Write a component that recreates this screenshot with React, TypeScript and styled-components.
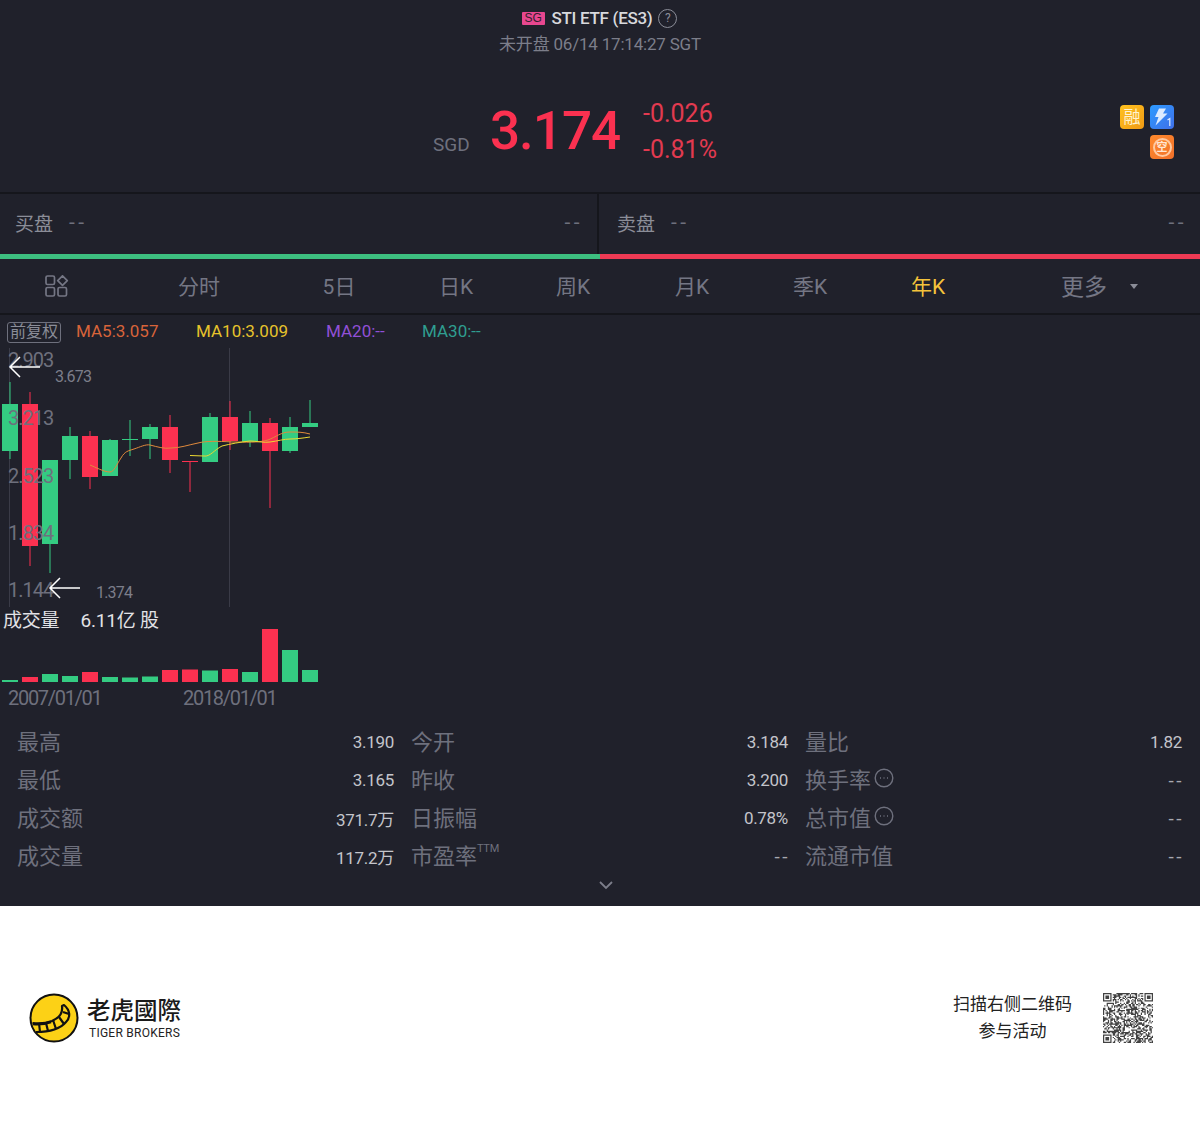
import styled, { createGlobalStyle } from "styled-components";

const FONT = `Roboto, "Noto Sans CJK SC", sans-serif`;
const GREEN = "#34cc82";
const RED = "#fb3150";

const GlobalStyle = createGlobalStyle`
  body {
    margin: 0;
    background: #fff;
    font-family: ${FONT};
  }
`;

// [x, bodyTop, bodyBottom, wickTop, wickBottom, isUp]
const candles: [number, number, number, number, number, boolean][] = [
  [2, 404, 451, 382, 459, false],
  [22, 404, 546, 392, 566, true],
  [42, 460, 544, 460, 573, false],
  [62, 436, 460, 427, 479, false],
  [82, 436, 477, 431, 489, true],
  [102, 440, 476, 439, 476, false],
  [122, 439, 440, 420, 456, false],
  [142, 427, 439, 424, 459, false],
  [162, 427, 460, 415, 473, true],
  [182, 461, 462, 461, 492, true],
  [202, 417, 462, 413, 462, false],
  [222, 417, 441, 401, 450, true],
  [242, 423, 442, 411, 447, false],
  [262, 423, 451, 418, 508, true],
  [282, 427, 451, 417, 453, false],
  [302, 423, 427, 400, 427, false],
];

const volumes: [number, boolean][] = [
  [680, false], [677, true], [674, false], [676, false],
  [672, true], [677, false], [677.5, false], [676.5, false],
  [670, true], [669.5, true], [670.5, false], [669, true],
  [672, false], [629, true], [650, false], [670, false],
];

const ma5 = "M90 465 C95 467 104 472 110 472 C114 472 117 464 121 458 C125 451 128 451 134 449 C140 447 146 444 150 445 C158 447 164 449 171 448 C180 448 188 445 198 443 C206 441 216 441 233 442 C245 442 258 443 268 440 C276 437 281 432 290 432 C297 432 303 432 310 434";
const ma10 = "M190 455.5 L204 456 C210 457 214 450 222 446 C230 444 240 442 250 441 C256 441 264 443 270 442 C278 441 284 439 290 439 C297 439 303 438 310 437";

const axisLabels = [
  { label: "2.903", y: 367 },
  { label: "3.213", y: 425 },
  { label: "2.523", y: 483 },
  { label: "1.834", y: 540 },
  { label: "1.144", y: 597 },
];

const tabs = [
  { label: "分时", w: 170 },
  { label: "5日", w: 110 },
  { label: "日K", w: 124 },
  { label: "周K", w: 110 },
  { label: "月K", w: 128 },
  { label: "季K", w: 108 },
  { label: "年K", w: 128, active: true },
];

const stats = [
  ["最高", "3.190", "今开", "3.184", "量比", "1.82"],
  ["最低", "3.165", "昨收", "3.200", "换手率*", "--"],
  ["成交额", "371.7万", "日振幅", "0.78%", "总市值*", "--"],
  ["成交量", "117.2万", "市盈率^", "--", "流通市值", "--"],
];

const QR_SIZE = 41;
const inFinder = (x: number, y: number) =>
  (x < 8 && y < 8) || (x >= QR_SIZE - 8 && y < 8) || (x < 8 && y >= QR_SIZE - 8);

const finder = (ox: number, oy: number) =>
  `M${ox} ${oy}h7v7h-7zM${ox + 1} ${oy + 1}v5h5v-5zM${ox + 2} ${oy + 2}h3v3h-3z`;

const buildQrPath = () => {
  let seed = 20240614;
  let d = finder(0, 0) + finder(QR_SIZE - 7, 0) + finder(0, QR_SIZE - 7);
  for (let y = 0; y < QR_SIZE; y++) {
    for (let x = 0; x < QR_SIZE; x++) {
      seed = (seed * 1103515245 + 12345) & 0x7fffffff;
      if (!inFinder(x, y) && (seed >> 16) % 100 < 50) d += `M${x} ${y}h1v1h-1z`;
    }
  }
  return d;
};

const App = () => {
  return (
    <>
      <GlobalStyle />
      <Panel>
        <Header>
          <TitleRow>
            <MarketTag>SG</MarketTag>
            <Title>STI ETF (ES3)</Title>
            <HelpIcon>?</HelpIcon>
          </TitleRow>
          <SubTitle>未开盘 06/14 17:14:27 SGT</SubTitle>
        </Header>

        <QuoteRow>
          <Currency>SGD</Currency>
          <Price>3.174</Price>
          <Changes>
            <Change>-0.026</Change>
            <Change>-0.81%</Change>
          </Changes>
          <Badges>
            <Badge $bg="linear-gradient(135deg, #ffc21f, #f09a14)">融</Badge>
            <Badge $bg="linear-gradient(135deg, #2d9bff, #3f6fe8)">
              <svg width="24" height="24" viewBox="0 0 24 24">
                <path d="M9 3.500h7l-3 5h4.500L5.500 20.500l3-8.500H5z" fill="#dcebff" />
                <path d="M17.500 15l2.300-1.500v7.500" stroke="#dcebff" strokeWidth="1.200" fill="none" />
              </svg>
            </Badge>
            <BadgeGap />
            <Badge $bg="linear-gradient(135deg, #ff8a2d, #f0702a)">
              <BadgeRing>空</BadgeRing>
            </Badge>
          </Badges>
        </QuoteRow>

        <BidRow>
          <BidCell>
            <BidLabel>买盘</BidLabel>
            <BidDash>--</BidDash>
            <BidEnd>--</BidEnd>
          </BidCell>
          <BidCell $right>
            <BidLabel>卖盘</BidLabel>
            <BidDash>--</BidDash>
            <BidEnd>--</BidEnd>
          </BidCell>
        </BidRow>
        <RatioBar>
          <RatioPart $color="#3dbf80" />
          <RatioPart $color="#ee3a54" />
        </RatioBar>

        <Tabs>
          <Tab $w={114}>
            <svg width="24" height="22" viewBox="0 0 24 22" fill="none" stroke="#747684" strokeWidth="1.700">
              <rect x="1" y="1" width="8.500" height="8.500" rx="1.500" />
              <rect x="1" y="12.500" width="8.500" height="8.500" rx="1.500" />
              <rect x="13" y="12.500" width="8.500" height="8.500" rx="1.500" />
              <path d="M17.500 0.800l4.800 4.800-4.800 4.800-4.800-4.800z" strokeLinejoin="round" />
            </svg>
          </Tab>
          {tabs.map(tab => (
            <Tab key={tab.label} $w={tab.w} $active={tab.active} $text>
              {tab.label}
            </Tab>
          ))}
          <MoreTab>
            更多
            <Caret />
          </MoreTab>
        </Tabs>

        <Legend>
          <AdjustTag>前复权</AdjustTag>
          <LegendItem $color="#d8643a" $w={120}>MA5:3.057</LegendItem>
          <LegendItem $color="#e6c32b" $w={130}>MA10:3.009</LegendItem>
          <LegendItem $color="#9150d6" $w={96}>MA20:--</LegendItem>
          <LegendItem $color="#2f9e90">MA30:--</LegendItem>
        </Legend>

        <ChartSvg width="1200" height="259" viewBox="0 348 1200 259">
          <line x1="9.500" y1="348" x2="9.500" y2="607" stroke="#3a3b47" />
          <line x1="229.500" y1="348" x2="229.500" y2="607" stroke="#3a3b47" />
          {candles.map(([x, top, bottom, wickTop, wickBottom, up]) => (
            <g key={x} fill={up ? RED : GREEN}>
              <line x1={x + 8} y1={wickTop} x2={x + 8} y2={wickBottom} stroke={up ? RED : GREEN} />
              <rect x={x} y={top} width="16" height={Math.max(bottom - top, 1)} />
            </g>
          ))}
          <path d={ma5} fill="none" stroke="#e08a3c" strokeWidth="1" />
          <path d={ma10} fill="none" stroke="#ecd832" strokeWidth="1" />
          {axisLabels.map(item => (
            <AxisText key={item.label} x="8" y={item.y}>
              {item.label}
            </AxisText>
          ))}
          <PeakText x="55" y="381.500">3.673</PeakText>
          <PeakText x="96" y="597.500">1.374</PeakText>
          <path d="M40 367H10M20 357L10 367L20 377" fill="none" stroke="#fff" strokeWidth="1.500" />
          <path d="M80 588H50M60 578L50 588L60 598" fill="none" stroke="#fff" strokeWidth="1.500" />
        </ChartSvg>

        <VolumeLabel>
          <span>成交量</span>
          <span>6.11亿 股</span>
        </VolumeLabel>
        <ChartSvg width="1200" height="54" viewBox="0 629 1200 54">
          {volumes.map(([top, up], i) => (
            <rect key={i} x={2 + i * 20} y={top} width="16" height={682 - top} fill={up ? RED : GREEN} />
          ))}
        </ChartSvg>
        <Dates>
          <DateText $w={175}>2007/01/01</DateText>
          <DateText>2018/01/01</DateText>
        </Dates>

        <Stats>
          {stats.map(row => [0, 2, 4].map(col => {
            const raw = row[col];
            const label = raw.replace(/[*^]/, "");
            const value = row[col + 1];
            return (
              <StatCell key={raw}>
                <StatLabel>
                  {label}
                  {raw.endsWith("^") && <Sup>TTM</Sup>}
                  {raw.endsWith("*") && (
                    <MoreIcon width="20" height="20" viewBox="0 0 20 20" fill="none">
                      <circle cx="10" cy="10" r="8.800" stroke="#6e707d" strokeWidth="1.400" />
                      <path d="M6 10h1M9.500 10h1M13 10h1" stroke="#6e707d" strokeWidth="1.400" />
                    </MoreIcon>
                  )}
                </StatLabel>
                <StatValue $dash={value === "--"}>{value}</StatValue>
              </StatCell>
            );
          }))}
        </Stats>
        <Expand>
          <svg width="16" height="10" viewBox="0 0 16 10" fill="none" stroke="#7c7e8a" strokeWidth="1.800">
            <path d="M2 2l6 6 6-6" />
          </svg>
        </Expand>
      </Panel>

      <Footer>
        <Brand>
          <svg width="50" height="50" viewBox="0 0 50 50">
            <circle cx="25" cy="25" r="23.500" fill="#fcd116" stroke="#111" strokeWidth="2" />
            <path
              d="M3.500 30C12 31 18 30 23 28C30 25 34 20 33 13L35 12C41 17 42 24 37 29C32 35 22 39 7 39"
              fill="#fcd116"
              stroke="#111"
              strokeWidth="2.200"
              strokeLinejoin="round"
            />
            <path d="M10 30l1 9M17 30l2 8M24 27l3 9M30 24l5 7M34 19l6 2" stroke="#111" strokeWidth="2.200" />
            <path d="M4 31C10 31.500 16 31 22 29" fill="none" stroke="#111" strokeWidth="2.500" />
          </svg>
          <BrandText>
            <BrandName>老虎國際</BrandName>
            <BrandSub>TIGER BROKERS</BrandSub>
          </BrandText>
        </Brand>
        <ScanBox>
          <ScanText>
            扫描右侧二维码
            <br />
            参与活动
          </ScanText>
          <QrCode width="50" height="50" viewBox={`0 0 ${QR_SIZE} ${QR_SIZE}`} fill="#222" fillRule="evenodd">
            <path d={buildQrPath()} />
          </QrCode>
        </ScanBox>
      </Footer>
    </>
  );
};

const Panel = styled.div`
  width: 1200px;
  height: 906px;
  background: #20212b;
  overflow: hidden;
`;

const Header = styled.div`
  padding-top: 5px;
  text-align: center;
`;

const TitleRow = styled.div`
  height: 26px;
  padding-right: 1px;
  display: flex;
  justify-content: center;
  align-items: center;
`;

const MarketTag = styled.span`
  width: 23px;
  height: 13px;
  margin-right: 7px;
  border-radius: 1px;
  background: #e8478f;
  color: #33202e;
  font: 12px/13px "Liberation Sans", sans-serif;
  text-align: center;
`;

const Title = styled.span`
  color: #d8d9dd;
  font-size: 17px;
  font-weight: 500;
  letter-spacing: -0.3px;
`;

const HelpIcon = styled.span`
  width: 17px;
  height: 17px;
  margin-left: 6px;
  border: 1.5px solid #8b8d98;
  border-radius: 50%;
  color: #8b8d98;
  font-size: 12px;
  line-height: 17px;
  text-align: center;
`;

const SubTitle = styled.div`
  height: 26px;
  color: #7c7e8a;
  font-size: 17px;
  line-height: 26px;
  letter-spacing: -0.2px;
`;

const QuoteRow = styled.div`
  box-sizing: border-box;
  height: 135px;
  padding: 13px 26px 0 433px;
  display: flex;
  align-items: center;
`;

const Currency = styled.span`
  align-self: flex-end;
  width: 57px;
  margin-bottom: 35px;
  color: #6e707d;
  font-size: 19px;
  line-height: 24px;
`;

const Price = styled.span`
  width: 153px;
  color: ${RED};
  font-size: 53px;
  font-weight: 500;
  line-height: 60px;
  letter-spacing: -1px;
`;

const Changes = styled.div`
  display: flex;
  flex-direction: column;
  gap: 11px;
`;

const Change = styled.span`
  color: #e23a50;
  font-size: 25px;
  line-height: 25px;
`;

const Badges = styled.div`
  margin: 2px 0 0 auto;
  display: grid;
  grid-template-columns: 24px 24px;
  gap: 6px;
`;

const Badge = styled.div<{ $bg: string }>`
  width: 24px;
  height: 24px;
  border-radius: 4px;
  background: ${p => p.$bg};
  color: #fff3d0;
  font-size: 17px;
  line-height: 24px;
  text-align: center;
  display: flex;
  align-items: center;
  justify-content: center;
`;

const BadgeGap = styled.div``;

const BadgeRing = styled.span`
  width: 15px;
  height: 15px;
  border: 2px solid #ffc9a0;
  border-radius: 50%;
  color: #ffe6d2;
  font-size: 11px;
  font-weight: 700;
  line-height: 15px;
`;

const BidRow = styled.div`
  height: 60px;
  display: flex;
  border-top: 2px solid #15161c;
`;

const BidCell = styled.div<{ $right?: boolean }>`
  box-sizing: border-box;
  flex: 1;
  display: flex;
  align-items: center;
  padding: ${p => (p.$right ? "0 16px 4px 18px" : "0 17px 4px 15px")};
  border-left: ${p => (p.$right ? "2px solid #15161c" : "none")};
  max-width: ${p => (p.$right ? "603px" : "597px")};
`;

const BidLabel = styled.span`
  color: #8b8d98;
  font-size: 19px;
`;

const BidDash = styled.span`
  margin-left: 16px;
  color: #6e707d;
  font-size: 21px;
  letter-spacing: 3.500px;
`;

const BidEnd = styled(BidDash)`
  margin: 0 -3px 0 auto;
`;

const RatioBar = styled.div`
  height: 5px;
  display: flex;
`;

const RatioPart = styled.div<{ $color: string }>`
  flex: 1;
  background: ${p => p.$color};
`;

const Tabs = styled.div`
  height: 54px;
  display: flex;
  border-bottom: 2px solid #15161c;
`;

const Tab = styled.div<{ $w: number; $active?: boolean; $text?: boolean }>`
  box-sizing: border-box;
  width: ${p => p.$w}px;
  padding-bottom: ${p => (p.$text ? "3px" : "0")};
  display: flex;
  align-items: center;
  justify-content: center;
  color: ${p => (p.$active ? "#f5c33b" : "#747684")};
  font-size: 21px;
`;

const MoreTab = styled.div`
  padding: 0 0 3px 69px;
  display: flex;
  align-items: center;
  color: #747684;
  font-size: 23px;
`;

const Caret = styled.i`
  margin: 3px 0 0 23px;
  border: 4px solid transparent;
  border-top: 5px solid #8b8d98;
  border-bottom: none;
`;

const Legend = styled.div`
  height: 33px;
  padding-left: 7px;
  display: flex;
  align-items: center;
`;

const AdjustTag = styled.span`
  box-sizing: border-box;
  width: 54px;
  height: 21px;
  margin: 2px 15px 0 0;
  border: 1.5px solid #6e707d;
  border-radius: 3px;
  color: #8b8d98;
  font-size: 16px;
  line-height: 18px;
  text-align: center;
  white-space: nowrap;
`;

const LegendItem = styled.span<{ $color: string; $w?: number }>`
  width: ${p => (p.$w ? `${p.$w}px` : "auto")};
  padding-bottom: 2px;
  color: ${p => p.$color};
  font-size: 17px;
`;

const ChartSvg = styled.svg`
  display: block;
`;

const AxisText = styled.text`
  fill: #6e707d;
  font-size: 20px;
  letter-spacing: -1px;
`;

const PeakText = styled.text`
  fill: #7c7e8a;
  font-size: 16px;
  letter-spacing: -0.8px;
`;

const VolumeLabel = styled.div`
  height: 22px;
  padding-left: 3px;
  display: flex;
  gap: 21px;
  color: #e2e2e6;
  font-size: 19px;
  line-height: 28px;
  letter-spacing: -0.2px;
`;

const Dates = styled.div`
  height: 30px;
  padding-left: 8px;
  display: flex;
  align-items: center;
`;

const DateText = styled.span<{ $w?: number }>`
  width: ${p => (p.$w ? `${p.$w}px` : "auto")};
  color: #6e707d;
  font-size: 20px;
  letter-spacing: -1.300px;
`;

const Stats = styled.div`
  margin-top: 10px;
  padding-left: 17px;
  display: grid;
  grid-template-columns: 377px 377px 377px;
  column-gap: 17px;
  grid-auto-rows: 38px;
`;

const StatCell = styled.div`
  display: flex;
  align-items: center;
  justify-content: space-between;
`;

const StatLabel = styled.span`
  padding-bottom: 4px;
  display: flex;
  align-items: center;
  color: #6e707d;
  font-size: 22px;
`;

const Sup = styled.sup`
  align-self: flex-start;
  margin: 3px 0 0 0;
  font-size: 11px;
  line-height: 16px;
  letter-spacing: -0.3px;
`;

const MoreIcon = styled.svg`
  margin: 0 0 0 3px;
`;

const StatValue = styled.span<{ $dash?: boolean }>`
  margin-right: ${p => (p.$dash ? "-2px" : "0")};
  color: ${p => (p.$dash ? "#a8a9b0" : "#c4c5cb")};
  font-size: ${p => (p.$dash ? "19px" : "17px")};
  letter-spacing: ${p => (p.$dash ? "2.500px" : "-0.3px")};
`;

const Expand = styled.div`
  height: 19px;
  padding-left: 598px;
  display: flex;
  align-items: center;
`;

const Footer = styled.div`
  box-sizing: border-box;
  width: 1200px;
  height: 224px;
  padding: 0 47px 0 29px;
  display: flex;
  align-items: center;
  justify-content: space-between;
`;

const Brand = styled.div`
  display: flex;
  align-items: center;
  gap: 8px;
`;

const BrandText = styled.div`
  display: flex;
  flex-direction: column;
`;

const BrandName = styled.span`
  color: #1a1a1a;
  font-size: 23.500px;
  font-weight: 500;
  line-height: 29px;
`;

const BrandSub = styled.span`
  padding-left: 2px;
  color: #222;
  font-size: 12px;
  line-height: 14px;
  letter-spacing: 0.25px;
`;

const ScanBox = styled.div`
  display: flex;
  align-items: center;
  gap: 31px;
`;

const ScanText = styled.div`
  color: #222;
  font-size: 17px;
  line-height: 27px;
  text-align: center;
`;

const QrCode = styled.svg`
  opacity: 0.85;
`;

export default App;
